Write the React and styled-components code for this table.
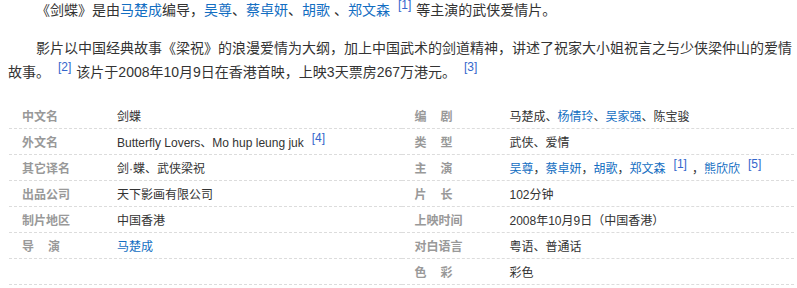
import React from "react";
import styled, { createGlobalStyle } from "styled-components";

const Global = createGlobalStyle`
  html, body { margin: 0; padding: 0; background: #fff; }
  body { font-family: "Liberation Sans", "Noto Sans CJK SC", sans-serif; color: #333; }
`;

const Page = styled.div`
  width: 797px;
  height: 288px;
  overflow: hidden;
  box-sizing: border-box;
  padding-left: 8px;
  padding-right: 1px;
`;

const Para = styled.p`
  margin: ${(p) => (p.$first ? "-2px 0 14px" : "0")};
  font-size: 14px;
  line-height: 24px;
  text-indent: 28px;
  color: #333;
`;

const Link = styled.a`
  color: #136ec2;
  text-decoration: none;
`;

const Sup = styled.sup`
  font-size: 12px;
  line-height: 0;
  color: #3366cc;
  vertical-align: super;
  margin: 0 5px 0 8px;
`;

const InfoTable = styled.div`
  display: grid;
  grid-template-columns: 1fr 1fr;
  margin: 19px 2px 0 1px;
  font-size: 12px;
`;

const Column = styled.dl`
  margin: 0;
  display: flex;
  flex-direction: column;
`;

const Row = styled.div`
  display: flex;
  align-items: center;
  height: 25px;
  border-bottom: 1px dashed #dcdcdc;
`;

const Label = styled.dt`
  width: 95px;
  padding-left: 13px;
  flex-shrink: 0;
  font-weight: bold;
  color: #999;
  letter-spacing: ${(p) => (p.$spaced ? "14px" : "0")};
  white-space: nowrap;
`;

const Value = styled.dd`
  margin: 0;
  color: #333;
  white-space: nowrap;
`;

const left = [
  ["中文名", <>剑蝶</>],
  ["外文名", <>Butterfly Lovers、Mo hup leung juk<Sup>[4]</Sup></>],
  ["其它译名", <>剑·蝶、武侠梁祝</>],
  ["出品公司", <>天下影画有限公司</>],
  ["制片地区", <>中国香港</>],
  ["导演", <Link href="#">马楚成</Link>, true],
  null,
];

const right = [
  ["编剧", <>马楚成、<Link href="#">杨倩玲</Link>、<Link href="#">吴家强</Link>、陈宝骏</>, true],
  ["类型", <>武侠、爱情</>, true],
  [
    "主演",
    <>
      <Link href="#">吴尊</Link>，<Link href="#">蔡卓妍</Link>，<Link href="#">胡歌</Link>，
      <Link href="#">郑文森</Link>
      <Sup>[1]</Sup>，<Link href="#">熊欣欣</Link>
      <Sup>[5]</Sup>
    </>,
    true,
  ],
  ["片长", <>102分钟</>, true],
  ["上映时间", <>2008年10月9日（中国香港）</>],
  ["对白语言", <>粤语、普通话</>],
  ["色彩", <>彩色</>, true],
];

function InfoColumn({ rows }) {
  return (
    <Column>
      {rows.map((r, i) =>
        r ? (
          <Row key={i}>
            <Label $spaced={r[2]}>{r[0]}</Label>
            <Value>{r[1]}</Value>
          </Row>
        ) : (
          <Row key={i} />
        )
      )}
    </Column>
  );
}

export default function App() {
  return (
    <Page>
      <Global />
      <Para $first>
        《剑蝶》是由<Link href="#">马楚成</Link>编导，<Link href="#">吴尊</Link>、
        <Link href="#">蔡卓妍</Link>、<Link href="#">胡歌</Link> 、<Link href="#">郑文森</Link>
        <Sup>[1]</Sup>等主演的武侠爱情片。
      </Para>
      <Para>
        影片以中国经典故事《梁祝》的浪漫爱情为大纲，加上中国武术的剑道精神，讲述了祝家大小姐祝言之与少侠梁仲山的爱情故事。
        <Sup>[2]</Sup>该片于2008年10月9日在香港首映，上映3天票房267万港元。<Sup>[3]</Sup>
      </Para>
      <InfoTable>
        <InfoColumn rows={left} />
        <InfoColumn rows={right} />
      </InfoTable>
    </Page>
  );
}
